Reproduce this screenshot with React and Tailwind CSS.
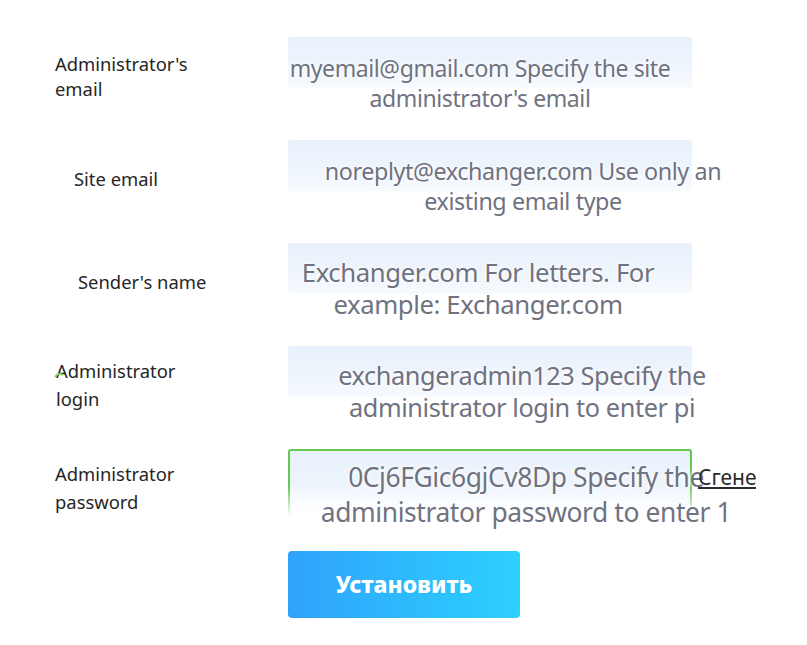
import React from 'react';

const rows = [
    {
        label: ["Administrator's", 'email'],
        labelCls: 'pl-0 leading-[25px]',
        lines: ['myemail@gmail.com Specify the site', "administrator's email"],
        valueCls: 'pt-[16px] text-[23px] leading-[30px]',
        center: 480,
    },
    {
        label: ['Site email'],
        labelCls: 'pl-[19px] leading-[25px]',
        lines: ['noreplyt@exchanger.com Use only an', 'existing email type'],
        valueCls: 'pt-[16px] text-[23.3px] leading-[30px]',
        center: 523,
    },
    {
        label: ["Sender's name"],
        labelCls: 'pl-[23px] leading-[25px]',
        lines: ['Exchanger.com For letters. For', 'example: Exchanger.com'],
        valueCls: 'pt-[14px] text-[25.7px] leading-[32px]',
        center: 478,
    },
    {
        label: ['Administrator', 'login'],
        labelCls: 'pl-px leading-[28px]',
        lines: ['exchangeradmin123 Specify the', 'administrator login to enter pi'],
        valueCls: 'pt-[13px] text-[25.3px] leading-[32px]',
        center: 522,
        mark: true,
    },
    {
        label: ['Administrator', 'password'],
        labelCls: 'pl-0 leading-[28px]',
        lines: ['0Cj6FGic6gjCv8Dp Specify the', 'administrator password to enter 1'],
        valueCls: 'pt-[11px] text-[26.4px] leading-[35px]',
        center: 526,
        active: true,
    },
];

function Row({ row }) {
    return (
        <div className="flex h-[103px]">
            {/* label */}
            <div className={`w-[233px] h-[77px] flex items-center ${row.labelCls}`}>
                <div className="relative text-[18.4px] text-[#262626]">
                    {row.mark && (
                        <svg className="absolute left-[-2px] top-[15px]" width="10" height="6" viewBox="0 0 10 6">
                            <path d="M1 5 Q4 0 9 3" stroke="#8fd14f" strokeWidth="1.5" fill="none" />
                        </svg>
                    )}
                    {row.label.map((l, i) => (
                        <div key={i}>{l}</div>
                    ))}
                </div>
            </div>

            {/* field */}
            <div className="relative w-[470px]">
                <div
                    className={`absolute left-0 top-0 w-[404px] rounded-[3px] bg-gradient-to-b from-[#e8f1fb] via-[#edf4fc] to-[#f7fafe] ${
                        row.active ? 'h-[66px] border-2 border-b-0 border-[#62c94f]' : 'h-[51px]'
                    }`}
                />
                {row.active && (
                    <div className="absolute left-0 top-[36px] w-[404px] h-[32px] bg-gradient-to-b from-transparent to-white" />
                )}
                <div
                    className={`relative text-[#6f7280] text-center whitespace-nowrap tracking-[-0.4px] [text-shadow:0_0_3px_#fff,0_0_5px_#fff] ${row.valueCls}`}
                    style={{ width: 600, marginLeft: row.center - 288 - 300 }}
                >
                    {row.lines[0]}
                    <br />
                    {row.lines[1]}
                </div>
                {row.active && (
                    <div className="absolute left-[410px] top-[13px] w-[59px] overflow-hidden whitespace-nowrap text-[21px] leading-[31px] text-[#2b2b2b] underline">
                        Сгенерировать
                    </div>
                )}
            </div>
        </div>
    );
}

export default function App() {
    return (
        <div className="w-[807px] h-[645px] bg-white overflow-hidden font-['Noto_Sans',sans-serif] pl-[55px] pt-[37px]">
            {rows.map((row, i) => (
                <Row key={i} row={row} />
            ))}
            <div className="pl-[233px] -mt-[1px]">
                <button className="w-[232px] h-[67px] rounded-[4px] bg-gradient-to-r from-[#30a2fb] to-[#2dd0fe] text-white text-[23px] font-extrabold">
                    Установить
                </button>
            </div>
        </div>
    );
}
